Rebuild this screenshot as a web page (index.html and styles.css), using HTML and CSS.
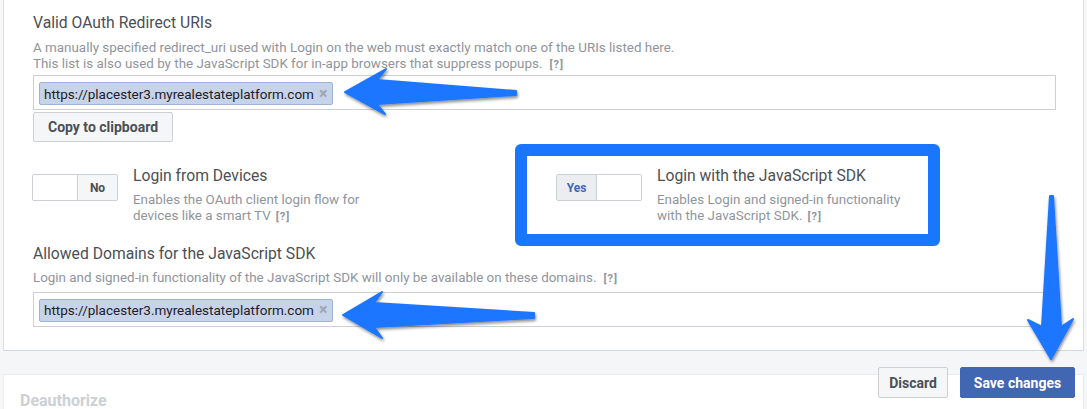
FILE: index.html
```html
<!DOCTYPE html>
<html lang="en">
<head>
<meta charset="utf-8">
<title>Facebook Login Settings</title>
<link rel="stylesheet" href="styles.css">
</head>
<body>
<div class="page">
  <section class="card settings">
    <div class="field">
      <h3 class="label">Valid OAuth Redirect URIs</h3>
      <p class="desc">A manually specified redirect_uri used with Login on the web must exactly match one of the URIs listed here.<br>This list is also used by the JavaScript SDK for in-app browsers that suppress popups.<span class="help">[?]</span></p>
      <div class="tokens"><span class="token">https://placester3.myrealestateplatform.com<span class="remove">×</span></span></div>
      <button class="btn copy" type="button">Copy to clipboard</button>
    </div>

    <div class="toggles">
      <div class="toggle-item">
        <div class="switch off"><span class="knob"></span><span class="state">No</span></div>
        <div class="toggle-text">
          <div class="label">Login from Devices</div>
          <p class="desc">Enables the OAuth client login flow for<br>devices like a smart TV<span class="help">[?]</span></p>
        </div>
      </div>
      <div class="toggle-item">
        <div class="switch on"><span class="state">Yes</span><span class="knob"></span></div>
        <div class="toggle-text">
          <div class="label">Login with the JavaScript SDK</div>
          <p class="desc">Enables Login and signed-in functionality<br>with the JavaScript SDK.<span class="help">[?]</span></p>
        </div>
      </div>
    </div>

    <div class="field domains">
      <h3 class="label">Allowed Domains for the JavaScript SDK</h3>
      <p class="desc">Login and signed-in functionality of the JavaScript SDK will only be available on these domains.<span class="help">[?]</span></p>
      <div class="tokens"><span class="token">https://placester3.myrealestateplatform.com<span class="remove">×</span></span></div>
    </div>
  </section>

  <section class="card deauth">
    <h3 class="deauth-title">Deauthorize</h3>
  </section>
</div>

<div class="actions">
  <button class="btn discard" type="button">Discard</button>
  <button class="btn primary" type="button">Save changes</button>
</div>

<div class="highlight"></div>

<svg class="arrows" width="1087" height="409" viewBox="0 0 1087 409" aria-hidden="true">
  <defs>
    <filter id="shadow" x="-20%" y="-20%" width="140%" height="140%">
      <feDropShadow dx="1" dy="2" stdDeviation="1.5" flood-color="#000" flood-opacity="0.45"/>
    </filter>
  </defs>
  <g fill="#1b76ff" stroke="#1b76ff" stroke-width="2" stroke-linejoin="round" filter="url(#shadow)">
    <polygon points="345,92 386,69 377,80 516,91 516,95 377,104 385,114"/>
    <polygon points="343,315 382,292 374,303 534,313 534,318 374,327 382,338"/>
    <polygon points="1050,196 1053,196 1061,327 1073,319 1051,359 1028,320 1042,327"/>
  </g>
</svg>
</body>
</html>
```

FILE: styles.css
```css
html, body {
  margin: 0;
  padding: 0;
}

body {
  width: 1087px;
  height: 409px;
  overflow: hidden;
  position: relative;
  background: #f5f6f7;
  font-family: Roboto, "Liberation Sans", Arial, sans-serif;
  color: #4b4f56;
}

.page {
  padding: 0 3px;
}

.card {
  background: #fff;
  border: 1px solid #dddfe2;
  box-sizing: border-box;
}

.settings {
  border-top: none;
  border-bottom-color: #d3d6db;
  padding: 13px 27px 23px 29px;
}

.field {
  display: flex;
  flex-direction: column;
  align-items: flex-start;
}

.label {
  margin: 0;
  font-size: 15.7px;
  line-height: 20px;
  font-weight: normal;
  color: #4b4f56;
}

.desc {
  margin: 7px 0 3px;
  font-size: 13.4px;
  line-height: 15.5px;
  color: #90949c;
}

.help {
  margin-left: 7px;
  font-size: 11px;
  color: #90949c;
  letter-spacing: 1px;
  font-weight: bold;
}

.toggle-text .help {
  margin-left: 5px;
}

.tokens {
  align-self: stretch;
  height: 35px;
  box-sizing: border-box;
  border: 1px solid #ccd0d5;
  padding: 6px 5px 0;
}

.token {
  display: inline-flex;
  align-items: center;
  height: 23px;
  box-sizing: border-box;
  padding: 0 5px 0 4px;
  background: #c7d3e9;
  border: 1px solid #9db3da;
  border-radius: 2px;
  font-size: 13.5px;
  color: #1d2129;
}

.remove {
  margin-left: 5px;
  color: #a0a6b0;
  font-size: 16px;
  font-weight: bold;
  line-height: 1;
}

.btn {
  font-family: Roboto, "Liberation Sans", Arial, sans-serif;
  font-weight: bold;
  font-size: 14px;
  border-radius: 2px;
  box-sizing: border-box;
  cursor: pointer;
  padding: 0;
}

.copy {
  margin-top: 2px;
  width: 140px;
  height: 30px;
  background: #f5f6f7;
  border: 1px solid #ccd0d5;
  color: #4b4f56;
}

.toggles {
  display: grid;
  grid-template-columns: 523px 1fr;
  margin-top: 24px;
}

.toggle-item {
  display: flex;
  align-items: flex-start;
  gap: 15px;
}

.toggle-item:first-child {
  margin-left: -1px;
}

.toggle-text .desc {
  margin: 6px 0 0;
}

.switch {
  flex: none;
  display: flex;
  width: 86px;
  height: 27px;
  margin-top: 8px;
  box-sizing: border-box;
  border: 1px solid #ccd0d5;
  border-radius: 2px;
  background: #f5f6f7;
  overflow: hidden;
}

.switch .knob {
  width: 44px;
  background: #fff;
}

.switch.off .knob {
  border-right: 1px solid #ccd0d5;
}

.switch.on .knob {
  border-left: 1px solid #ccd0d5;
}

.switch .state {
  flex: 1;
  display: flex;
  align-items: center;
  justify-content: center;
  font-size: 12px;
  font-weight: bold;
  color: #4b4f56;
}

.switch.on .state {
  color: #4267b2;
  background: #ebedf0;
}

.domains {
  margin-top: 20px;
}

.domains .desc {
  margin-top: 6px;
  margin-bottom: 5px;
}

.deauth {
  margin-top: 23px;
  border-color: #e9ebee;
  padding: 16px 16px;
  height: 80px;
}

.deauth-title {
  margin: 0;
  font-size: 16px;
  line-height: 20px;
  font-weight: bold;
  color: #ccd0d5;
}

.actions {
  position: absolute;
  top: 367px;
  right: 12px;
  display: flex;
  gap: 12px;
}

.actions .btn {
  height: 31px;
}

.discard {
  width: 70px;
  background: #f5f6f7;
  border: 1px solid #ccd0d5;
  color: #4b4f56;
}

.primary {
  width: 115px;
  background: #4267b2;
  border: 1px solid #4267b2;
  color: #fff;
}

.highlight {
  position: absolute;
  left: 515px;
  top: 144px;
  width: 425px;
  height: 102px;
  box-sizing: border-box;
  border: 12px solid #1b76ff;
  border-radius: 6px;
}

.arrows {
  position: absolute;
  left: 0;
  top: 0;
  pointer-events: none;
}
```
